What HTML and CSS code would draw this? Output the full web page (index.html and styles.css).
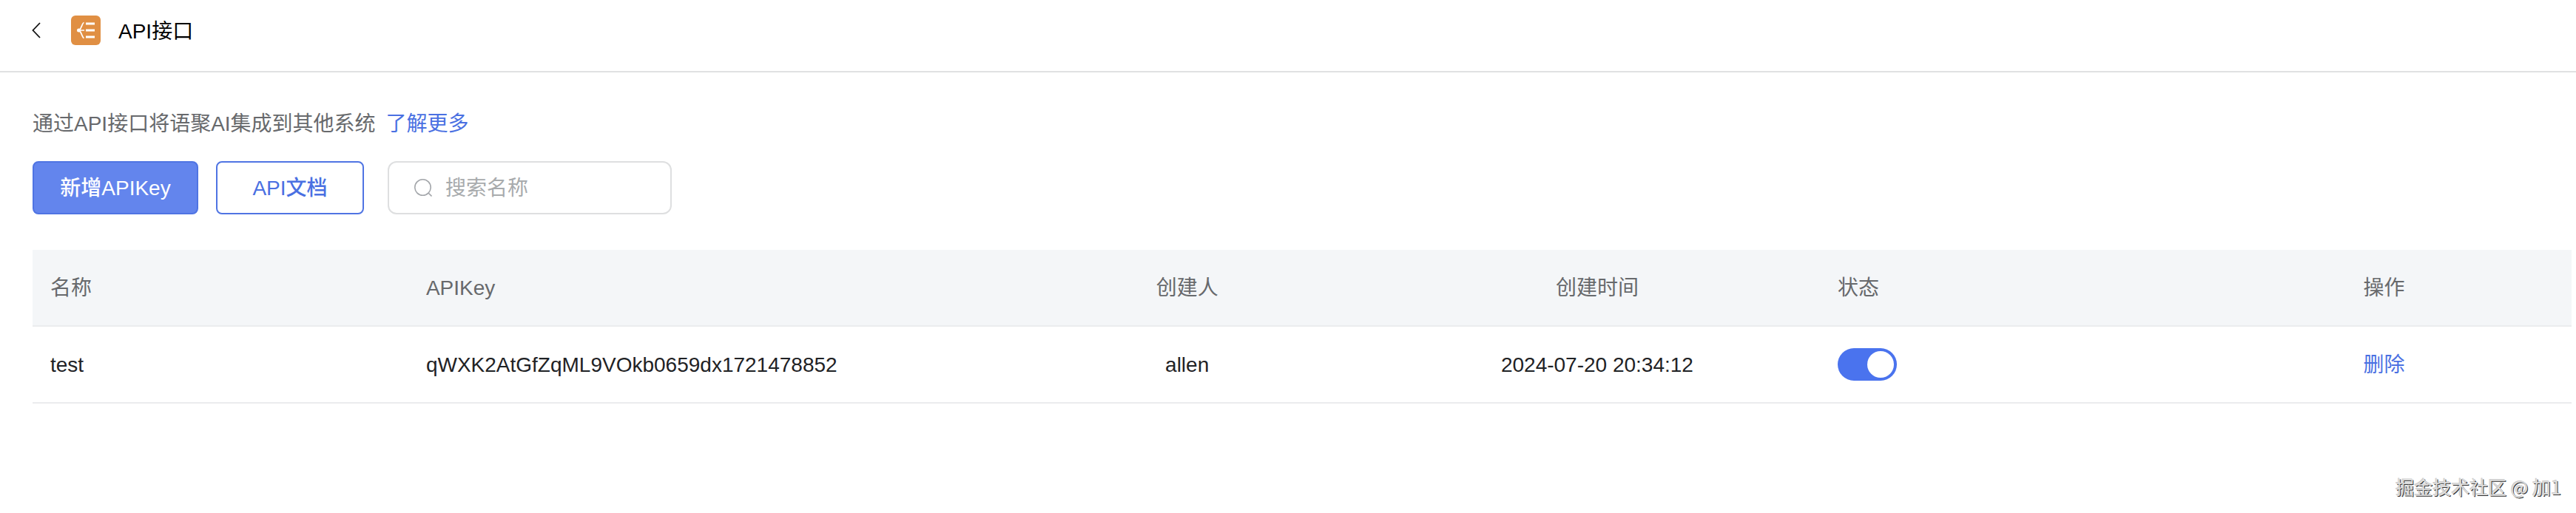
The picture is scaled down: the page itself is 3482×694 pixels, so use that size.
FILE: index.html
```html
<!DOCTYPE html>
<html lang="zh-CN">
<head>
<meta charset="utf-8">
<title>API接口</title>
<link rel="stylesheet" href="styles.css">
</head>
<body>
<header class="topbar">
  <button class="back" type="button" aria-label="返回">
    <svg width="12" height="22" viewBox="0 0 12 22" fill="none" stroke="#111" stroke-width="1.800"><path d="M11 1 1.500 11 11 21"/></svg>
  </button>
  <svg class="app-icon" width="40" height="40" viewBox="0 0 40 40" aria-hidden="true">
    <rect width="40" height="40" rx="6" fill="#e08f43"/>
    <g fill="none" stroke="#fff">
      <path d="M20 11h12M20 20h12M20 29h12" stroke-width="3"/>
      <path d="M17.500 9.500C15 10 14.500 17 11 20c3.500 3 4 10 6.500 10.500M11 20h7" stroke-width="1.700"/>
    </g>
    <circle cx="10.500" cy="20" r="2.500" fill="#fff"/>
  </svg>
  <h1 class="title">API接口</h1>
</header>
<main class="content">
  <p class="intro">通过API接口将语聚AI集成到其他系统<a class="link" href="#">了解更多</a></p>
  <div class="toolbar">
    <button class="btn btn-primary" type="button">新增APIKey</button>
    <button class="btn btn-outline" type="button">API文档</button>
    <label class="search">
      <svg width="24" height="24" viewBox="0 0 24 24" fill="none" stroke="#a3a6aa" stroke-width="1.600" aria-hidden="true"><circle cx="11.500" cy="11.500" r="10.700"/><path d="m19 19 4.500 4.500"/></svg>
      <input class="search-input" type="text" placeholder="搜索名称" aria-label="搜索名称">
    </label>
  </div>
  <table class="keys">
    <colgroup>
      <col class="col-name"><col class="col-key"><col class="col-owner"><col class="col-time"><col class="col-state"><col class="col-action">
    </colgroup>
    <thead>
      <tr><th>名称</th><th>APIKey</th><th class="center">创建人</th><th class="center">创建时间</th><th>状态</th><th>操作</th></tr>
    </thead>
    <tbody>
      <tr>
        <td>test</td>
        <td>qWXK2AtGfZqML9VOkb0659dx1721478852</td>
        <td class="center">allen</td>
        <td class="center">2024-07-20 20:34:12</td>
        <td><input class="switch" type="checkbox" role="switch" aria-label="状态" checked></td>
        <td><a class="link" href="#">删除</a></td>
      </tr>
    </tbody>
  </table>
</main>
<div class="watermark">掘金技术社区 @ 加1</div>
</body>
</html>
```
FILE: styles.css
```css
* {
  box-sizing: border-box;
}

body {
  margin: 0;
  min-height: 100vh;
  position: relative;
  background: #fff;
  color: #1f2225;
  font-family: "Liberation Sans", "Noto Sans CJK SC", sans-serif;
  font-size: 28px;
  line-height: 40px;
}

button,
input {
  font: inherit;
}

.topbar {
  display: flex;
  align-items: center;
  padding: 21px 43px 35px;
  border-bottom: 2px solid #e0e1e2;
}

.back {
  display: flex;
  padding: 0;
  margin-right: 41px;
  border: 0;
  background: none;
  cursor: pointer;
}

.title {
  margin: 0 0 0 24px;
  padding-top: 4px;
  color: #000;
  font-size: 28px;
  font-weight: 400;
  line-height: 36px;
}

.content {
  padding: 50px 6px 0 44px;
}

.intro {
  margin: 0;
  color: #67696c;
}

.link {
  color: #4a70e2;
  text-decoration: none;
}

.intro .link {
  margin-left: 14px;
}

.toolbar {
  display: flex;
  margin: 30px 0 48px;
}

.btn {
  min-width: 200px;
  height: 72px;
  padding: 2px 35px 0;
  border: 2px solid #4f74e3;
  border-radius: 8px;
  font-weight: 500;
  cursor: pointer;
}

.btn-primary {
  min-width: 224px;
  margin-right: 24px;
  background: #6385ed;
  color: #fff;
}

.btn-outline {
  margin-right: 32px;
  background: #fff;
  color: #4a70e2;
}

.search {
  display: flex;
  align-items: center;
  gap: 18px;
  width: 384px;
  height: 72px;
  padding: 0 34px;
  border: 2px solid #dedfe0;
  border-radius: 12px;
}

.search svg {
  flex: none;
}

.search-input {
  flex: 1;
  min-width: 0;
  padding: 2px 0 0;
  border: 0;
  outline: 0;
  background: none;
  color: inherit;
}

.search-input::placeholder {
  color: #a8abad;
  opacity: 1;
}

.keys {
  width: 100%;
  table-layout: fixed;
  border-collapse: separate;
  border-spacing: 0;
}

.col-name { width: 14.8%; }
.col-key { width: 23.3%; }
.col-owner { width: 14.75%; }
.col-time { width: 17.55%; }
.col-state { width: 20.7%; }
.col-action { width: 8.9%; }

.keys th,
.keys td {
  height: 104px;
  padding: 2px 24px 0;
  border-bottom: 2px solid #ebecee;
  font-weight: 400;
  text-align: left;
  vertical-align: middle;
}

.keys th {
  background: #f4f6f8;
  color: #67696c;
}

.keys .center {
  text-align: center;
}

.switch {
  display: flex;
  align-items: center;
  width: 80px;
  height: 44px;
  margin: 0 0 2px;
  padding: 4px;
  appearance: none;
  border-radius: 22px;
  background: #c4c7cc;
  cursor: pointer;
}

.switch::before {
  content: "";
  width: 36px;
  height: 36px;
  border-radius: 50%;
  background: #fff;
}

.switch:checked {
  justify-content: flex-end;
  background: #4a73ee;
}

.watermark {
  position: absolute;
  right: 20px;
  bottom: 16px;
  color: #dedede;
  font-family: "Noto Sans CJK SC", sans-serif;
  font-size: 25px;
  text-shadow: 1px 1px 0 #333, -1px -1px 0 #ccc;
}
```
